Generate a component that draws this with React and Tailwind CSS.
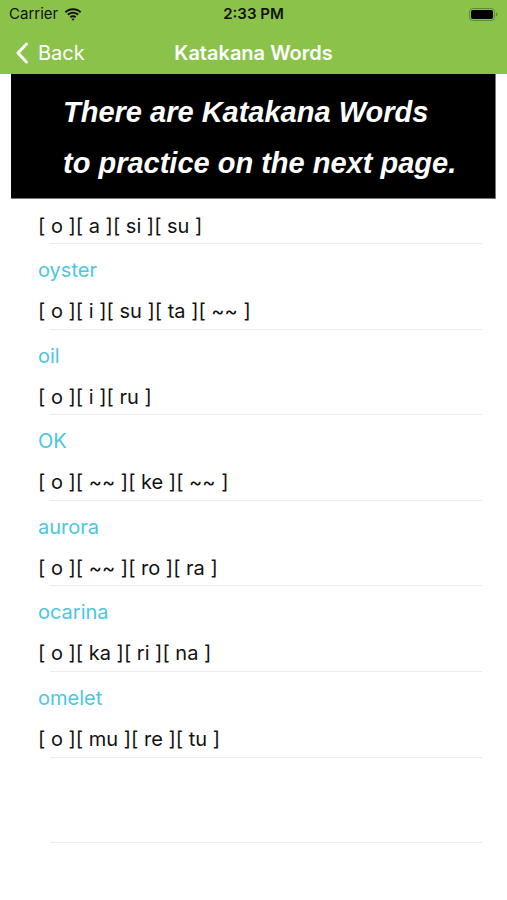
import React from "react";

const rows = [
  { word: "oyster", kana: "[ o ][ i ][ su ][ ta ][ ~~ ]" },
  { word: "oil", kana: "[ o ][ i ][ ru ]" },
  { word: "OK", kana: "[ o ][ ~~ ][ ke ][ ~~ ]" },
  { word: "aurora", kana: "[ o ][ ~~ ][ ro ][ ra ]" },
  { word: "ocarina", kana: "[ o ][ ka ][ ri ][ na ]" },
  { word: "omelet", kana: "[ o ][ mu ][ re ][ tu ]" },
];

function Wifi() {
  return (
    <svg width="18" height="13" viewBox="0 0 18 13">
      <path d="M9 2.2c2.7 0 5.1 1 7 2.7l1.3-1.4C15.1 1.4 12.2.2 9 .2S2.9 1.4.7 3.5L2 4.9c1.9-1.7 4.3-2.7 7-2.7z" fill="#111" />
      <path d="M9 5.8c1.7 0 3.3.6 4.5 1.7l1.3-1.4C13.2 4.7 11.2 3.8 9 3.8S4.8 4.7 3.2 6.1l1.3 1.4C5.7 6.4 7.3 5.8 9 5.8z" fill="#111" />
      <path d="M9 9.2c.8 0 1.5.3 2 .8l1.3-1.4C11.4 7.8 10.3 7.3 9 7.3s-2.4.5-3.3 1.3L7 10c.5-.5 1.2-.8 2-.8zM9 12.8l1.6-1.7c-.4-.4-1-.6-1.6-.6s-1.2.2-1.6.6z" fill="#111" />
    </svg>
  );
}

function Battery() {
  return (
    <svg width="29" height="13" viewBox="0 0 29 13">
      <rect x="0.5" y="0.5" width="25" height="12" rx="3.5" fill="none" stroke="#3d6b1f" strokeOpacity="0.6" />
      <rect x="2" y="2" width="22" height="9" rx="2" fill="#000" />
      <path d="M27 4.5c.9.3 1.5 1.1 1.5 2s-.6 1.7-1.5 2z" fill="#3d6b1f" fillOpacity="0.6" />
    </svg>
  );
}

export default function App() {
  const font = { fontFamily: "Inter, 'Noto Sans', sans-serif" };
  return (
    <div className="w-[507px] h-[900px] bg-white overflow-hidden" style={font}>
      <div className="bg-[#8bc34a] h-[74px] flex flex-col">
        <div className="h-[28px] flex items-center justify-between px-[9px] relative">
          <div className="flex items-center gap-[6px] text-[15px] text-[#111] pt-[1px]">
            <span>Carrier</span>
            <Wifi />
          </div>
          <div className="absolute left-0 right-0 top-0 h-[28px] flex items-center justify-center text-[15px] font-semibold text-[#111]">
            2:33 PM
          </div>
          <Battery />
        </div>
        <div className="flex-1 flex items-center relative pt-[4px]">
          <div className="flex items-center pl-[15px] gap-[9px] text-white text-[20px]">
            <svg width="14" height="22" viewBox="0 0 14 22">
              <path d="M11.5 2 L3 11 L11.5 20" fill="none" stroke="#fff" strokeWidth="3" strokeLinecap="round" strokeLinejoin="round" />
            </svg>
            <span>Back</span>
          </div>
          <div className="absolute inset-0 pt-[4px] flex items-center justify-center text-white text-[20px] font-semibold">
            Katakana Words
          </div>
        </div>
      </div>

      <div
        className="mx-[11px] h-[125px] bg-black border-r border-b border-[#777] pt-[13px] pl-[52px] text-white italic font-bold text-[29px] leading-[51px]"
        style={{ fontFamily: "'Liberation Sans', Arial, sans-serif" }}
      >
        <div>There are Katakana Words</div>
        <div>to practice on the next page.</div>
      </div>

      <div className="flex flex-col">
        <div className="h-[45px] flex flex-col">
          <div className="pt-[15px] pl-[38px] h-[24px] box-content text-[20px] leading-[24px] text-[#111]">
            [ o ][ a ][ si ][ su ]
          </div>
          <div className="mt-auto ml-[50px] w-[432px] h-px bg-[#ebebeb]" />
        </div>
        {rows.map((r) => (
          <div key={r.word} className="h-[85.6px] flex flex-col">
            <div className="pt-[14px] pl-[38px] h-[24px] box-content text-[20px] leading-[24px] text-[#4dc6df]">
              {r.word}
            </div>
            <div className="mt-[17px] pl-[38px] h-[24px] text-[20px] leading-[24px] text-[#111]">
              {r.kana}
            </div>
            <div className="mt-auto ml-[50px] w-[432px] h-px bg-[#ebebeb]" />
          </div>
        ))}
        <div className="h-[85.6px] flex flex-col">
          <div className="mt-auto ml-[50px] w-[432px] h-px bg-[#ebebeb]" />
        </div>
      </div>
    </div>
  );
}
